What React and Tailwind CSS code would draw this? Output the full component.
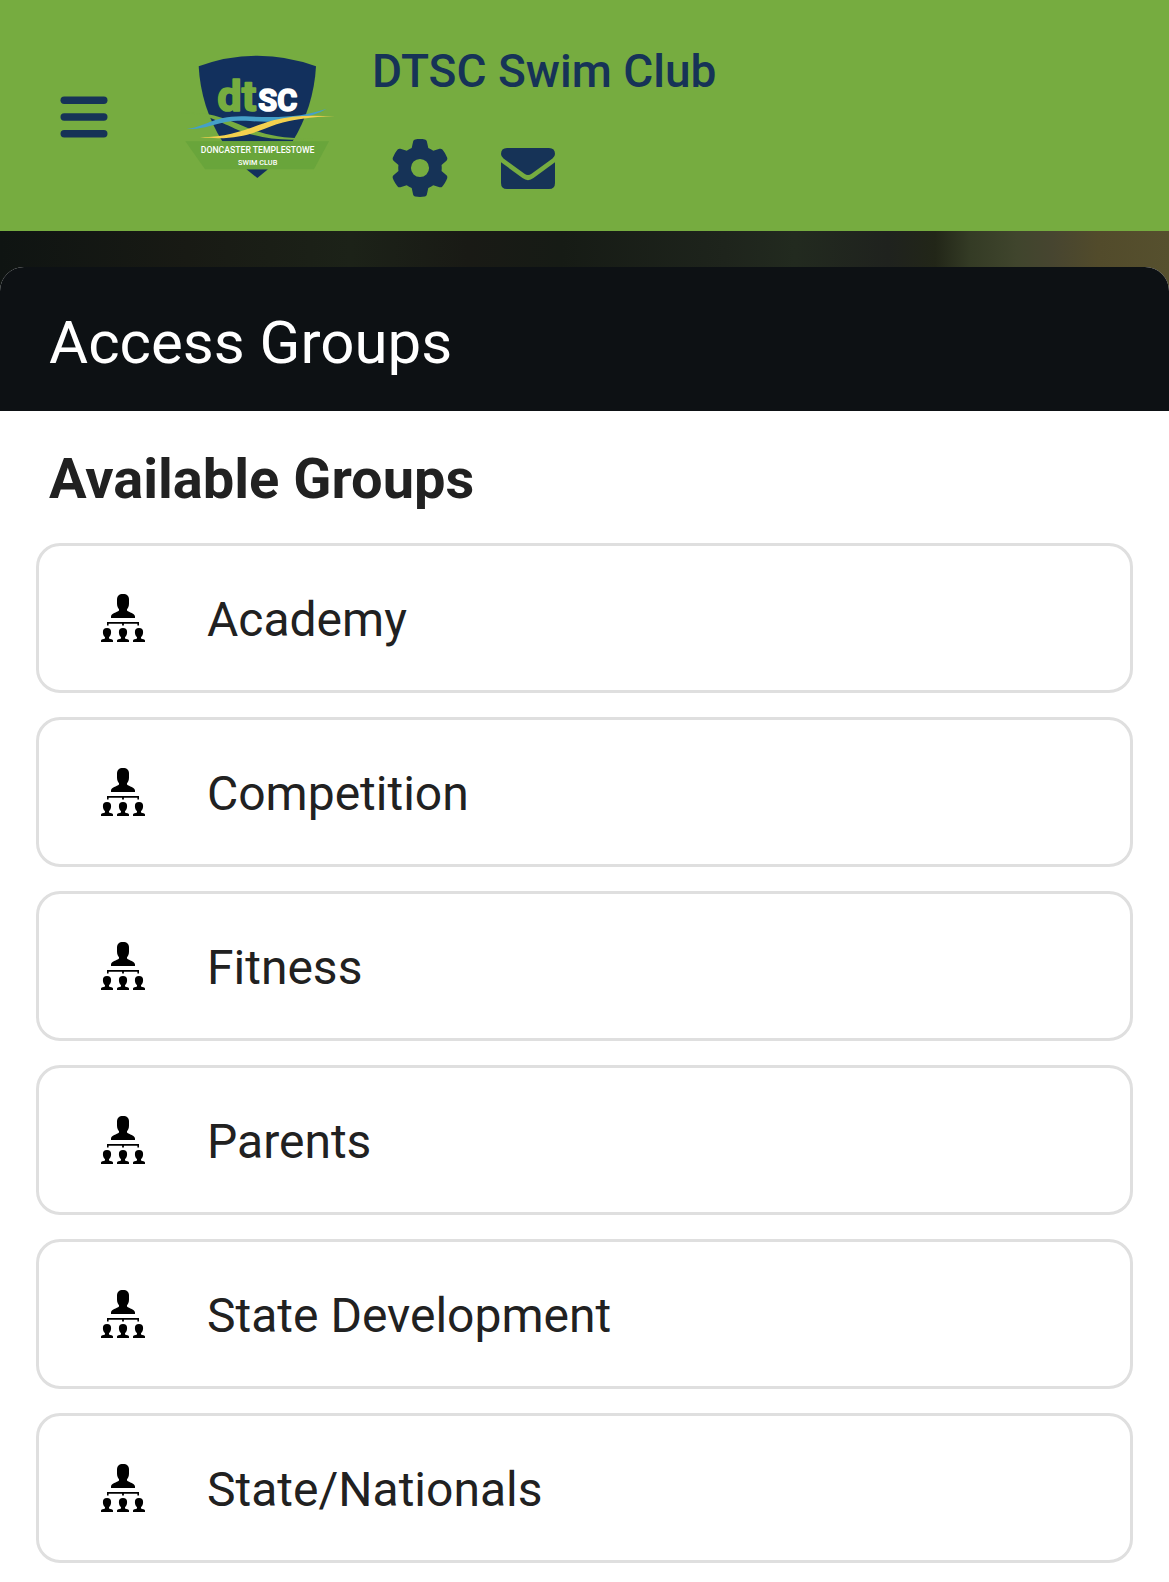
import React from 'react';
import { FaGear } from 'react-icons/fa6';

const groups = [
  { id: 'academy', name: 'Academy' },
  { id: 'competition', name: 'Competition' },
  { id: 'fitness', name: 'Fitness' },
  { id: 'parents', name: 'Parents' },
  { id: 'state-development', name: 'State Development' },
  { id: 'state-nationals', name: 'State/Nationals' },
];

function ClubLogo() {
  return (
    <svg viewBox="0 0 540 450" className="w-[180px] h-[150px] shrink-0" role="img" aria-label="Doncaster Templestowe Swim Club">
      {/* Shield */}
      <path d="M86 79 Q170 47 262 47 Q354 47 438 79 C434 160 408 240 368 304 H157 C116 240 90 160 86 79 Z" fill="#12305d" />
      <path d="M229 388 H294 L262 414 Z" fill="#12305d" />

      {/* Lettering */}
      <g fontFamily="Roboto, sans-serif" fontWeight="700" strokeLinejoin="round">
        <text x="142" y="212" fontSize="130" fill="#76ac40" stroke="#76ac40" strokeWidth="5">dt</text>
        <text x="265" y="212" fontSize="92" fill="#fff" stroke="#fff" strokeWidth="5">SC</text>
      </g>

      {/* Ribbons */}
      <path d="M30 219 C100 215 145 226 205 252 C270 281 330 298 432 295 C330 307 255 291 195 266 C140 241 105 220 30 219 Z" fill="#76ac40" />
      <path d="M50 267 C105 262 130 226 225 229 C340 234 400 230 470 206 C410 240 330 250 240 243 C140 237 120 270 50 267 Z" fill="#45a0c8" />
      <path d="M90 292 C190 292 235 263 310 241 C370 224 430 226 495 229 C420 231 370 238 320 253 C240 283 200 302 90 292 Z" fill="#f3d04e" />

      {/* Banner */}
      <path d="M46 304 H477 L432 388 H105 Z" fill="#69a53b" />
      <g fontFamily="Roboto, sans-serif" fontWeight="500" fill="#fff" textAnchor="middle">
        <text x="263" y="340" fontSize="26">DONCASTER TEMPLESTOWE</text>
        <text x="263" y="375" fontSize="22">SWIM CLUB</text>
      </g>
    </svg>
  );
}

function MenuIcon() {
  return (
    <svg viewBox="0 0 48 42" className="w-12 h-[42px]" fill="currentColor" aria-hidden="true">
      <rect x="0.5" y="0.5" width="47" height="7.4" rx="3.7" />
      <rect x="0.5" y="17.3" width="47" height="7.4" rx="3.7" />
      <rect x="0.5" y="34.1" width="47" height="7.4" rx="3.7" />
    </svg>
  );
}

function MailIcon() {
  return (
    <svg viewBox="0 0 54 41" className="w-[54px] h-[41px]" fill="currentColor" aria-hidden="true">
      <path d="M6 0 H48 Q54 0 54 6 Q54 8.7 51.5 10.5 L30.5 25.8 Q27 28.2 23.5 25.8 L2.5 10.5 Q0 8.7 0 6 Q0 0 6 0 Z" />
      <path d="M0 14.3 L21.5 30 Q27 34.3 32.5 30 L54 14.3 V35 Q54 41 48 41 H6 Q0 41 0 35 Z" />
    </svg>
  );
}

function GroupIcon() {
  const member = 'M6 34 C8.8 34 10.1 35.5 10.1 38 C10.1 40.7 9.2 42 8 43.2 V44.6 C9.5 45.3 12 45.2 12 46.6 V48 H0 V46.6 C0 45.2 2.5 45.3 4 44.6 V43.2 C2.8 42 1.9 40.7 1.9 38 C1.9 35.5 3.2 34 6 34 Z';

  return (
    <svg viewBox="0 0 44 48" className="w-11 h-12 shrink-0" fill="#000" aria-hidden="true">
      <path d="M22 0 C26 0 28 2 28 5.5 V9.5 C28 12.5 27 14 26 15.2 V16.5 C28 18.3 34 19.5 34 22.5 V24 H10 V22.5 C10 19.5 16 18.3 18 16.5 V15.2 C17 14 16 12.5 16 9.5 V5.5 C16 2 18 0 22 0 Z" />
      <path d="M6 28 H38 V31.6 H36.4 V29.8 H22.9 V31.6 H21.1 V29.8 H7.6 V31.6 H6 Z" />
      <path d={member} />
      <path d={member} transform="translate(16 0)" />
      <path d={member} transform="translate(32 0)" />
    </svg>
  );
}

function Header() {
  return (
    <header className="flex items-start bg-[#76ac40] pl-[60px] pr-6 pt-10 pb-[34px] text-[#163357]">
      <button type="button" aria-label="Open menu" className="mt-14">
        <MenuIcon />
      </button>
      <div className="ml-[62px]">
        <ClubLogo />
      </div>
      <div className="ml-[22px] flex flex-col">
        <span className="text-[46px] leading-[62px] font-medium">DTSC Swim Club</span>
        <div className="mt-[37px] ml-[19px] flex items-center gap-[52px]">
          <button type="button" aria-label="Settings">
            <FaGear className="size-[58px]" />
          </button>
          <button type="button" aria-label="Messages">
            <MailIcon />
          </button>
        </div>
      </div>
    </header>
  );
}

export default function App() {
  return (
    <div className="min-h-screen bg-white font-['Roboto',sans-serif] text-[#212121]">
      <Header />

      <main className="pt-9 bg-[linear-gradient(90deg,#0f1412_0%,#181a14_16%,#1c2218_30%,#191a15_40%,#161b15_48%,#1e241c_62%,#222a1f_68%,#1f221e_76%,#222618_80%,#343b25_83%,#40452d_87%,#474530_90%,#524b2b_94%,#56502e_100%)]">
        <section className="rounded-t-3xl bg-white">
          <h1 className="rounded-t-3xl bg-[#0d1114] px-[49px] pt-10 pb-8 text-[60px] leading-[72px] font-normal text-white">
            Access Groups
          </h1>

          <h2 className="px-[49px] pt-8 pb-7 text-[56px] leading-[72px] font-bold">Available Groups</h2>

          <ul className="flex flex-col gap-6 px-9 pb-[19px]">
            {groups.map((g) => (
              <li key={g.id}>
                <button
                  type="button"
                  className="flex h-[150px] w-full items-center gap-[62px] rounded-3xl border-3 border-[#dfdfdf] bg-white px-[62px] text-left text-[48px] leading-[60px]"
                >
                  <GroupIcon />
                  <span className="pt-1">{g.name}</span>
                </button>
              </li>
            ))}
          </ul>
        </section>
      </main>
    </div>
  );
}
